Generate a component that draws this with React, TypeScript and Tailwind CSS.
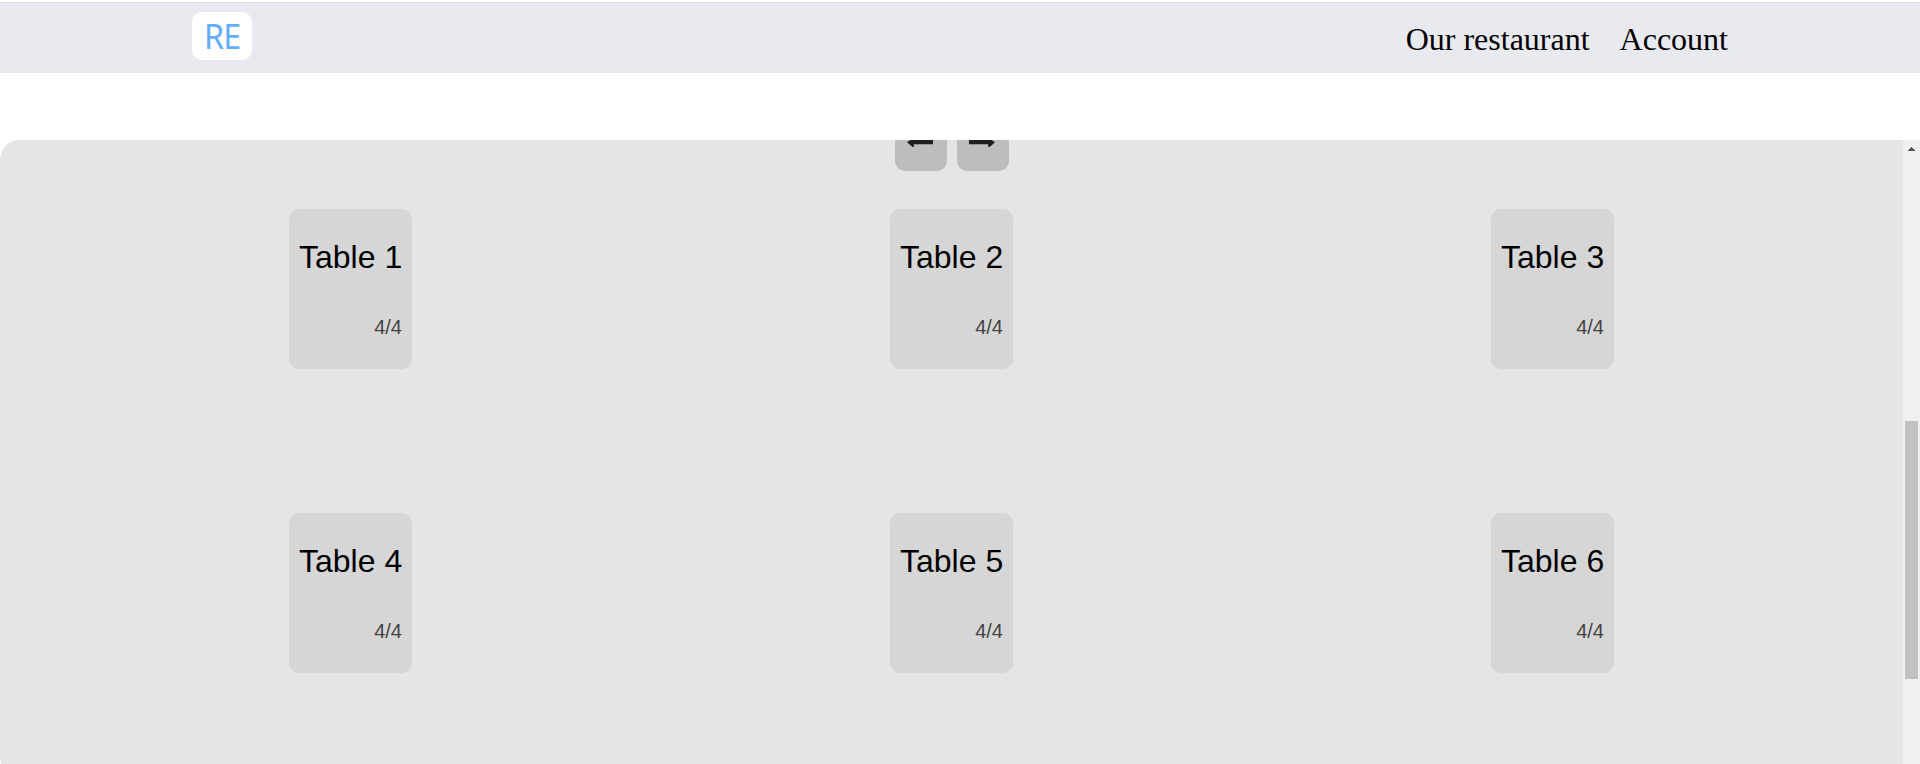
const tables = [1, 2, 3, 4, 5, 6];

function Arrow({ flip = false }: { flip?: boolean }) {
  return (
    <svg
      width="28"
      height="22"
      viewBox="0 0 28 22"
      className={flip ? "mr-[4px] -scale-x-100" : ""}
      fill="#1c1e20"
      aria-hidden="true"
    >
      <path d="M0 8.3 L6.8 3.6 V6 H26 V10.3 H6.8 V13 H5.4 Z" />
    </svg>
  );
}

function NavButton({ flip = false }: { flip?: boolean }) {
  return (
    <button className="flex h-[52px] w-[52px] items-center justify-center rounded-[10px] bg-[#bdbdbd]">
      <Arrow flip={flip} />
    </button>
  );
}

function TableCard({ id }: { id: number }) {
  return (
    <div className="flex h-[160px] w-[123px] flex-col rounded-[10px] bg-[#d6d6d6] px-[10px] pt-[30px]">
      <div className="whitespace-nowrap text-[32px] leading-[37px] text-black">Table {id}</div>
      <div className="mt-[40px] text-right text-[20px] leading-[23px] text-[#444]">4/4</div>
    </div>
  );
}

export default function App() {
  return (
    <div className="flex h-[764px] flex-col overflow-hidden bg-white font-['Liberation_Sans',Arial,sans-serif]">
      <header className="mt-[2px] flex h-[71px] shrink-0 items-start justify-between border-t border-[#dfe0df] bg-[#e9eaf0] px-[192px] pt-[9px]">
        <div className="flex h-[48px] w-[60px] items-center justify-center rounded-[10px] bg-white font-['Noto_Sans',sans-serif] text-[34px] leading-[48px] text-[#63adff]">
          <span className="scale-x-[0.95] tracking-[-0.8px]">RE</span>
        </div>
        <nav className="flex gap-[30px] pt-[9px] font-['Liberation_Serif',serif] text-[32px] leading-[37px] text-black">
          <a>Our restaurant</a>
          <a>Account</a>
        </nav>
      </header>
      <main className="mt-[67px] flex h-[637px] shrink-0 overflow-hidden rounded-l-[20px] bg-[#e6e4e5]">
        <div className="flex-1">
          <div className="-mt-[21px] flex justify-center gap-[10px]">
            <NavButton />
            <NavButton flip />
          </div>
          <div className="mt-[38px] grid auto-rows-[304px] grid-cols-3 justify-items-center px-[50px]">
            {tables.map((id) => (
              <TableCard key={id} id={id} />
            ))}
          </div>
        </div>
        <div className="flex w-[17px] flex-col items-center bg-[#f0f0f0]">
          <svg width="7" height="4" viewBox="0 0 7 4" className="mt-[7px]" fill="#505050" shapeRendering="crispEdges">
            <path d="M3 0h1v1h1v1h1v1h1v1H0V3h1V2h1V1h1z" />
          </svg>
          <div className="mt-[270px] h-[258px] w-[13px] bg-[#c1c1c1]" />
        </div>
      </main>
    </div>
  );
}
